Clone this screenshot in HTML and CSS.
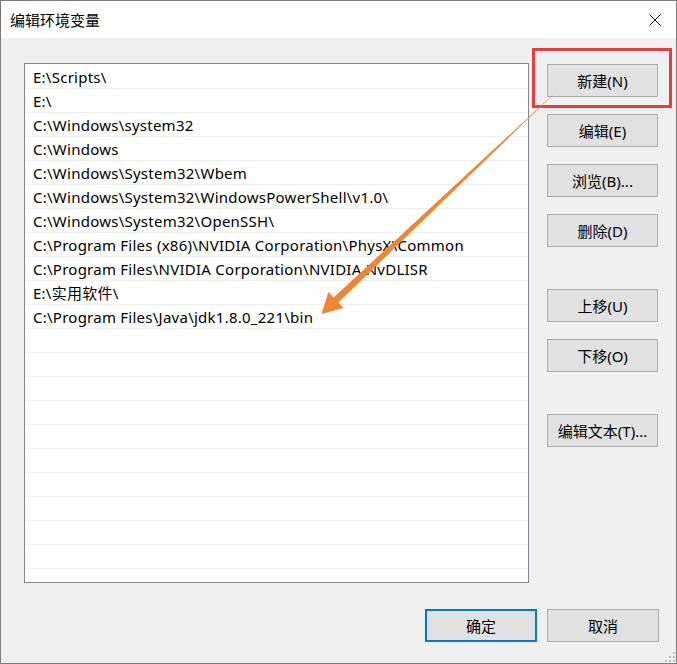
FILE: index.html
```html
<!DOCTYPE html>
<html lang="zh-CN">
<head>
    <meta charset="UTF-8">
    <title>编辑环境变量</title>
    <link rel="stylesheet" href="styles.css">
</head>
<body>
    <div class="window">
        <div class="titlebar">
            <span class="title">编辑环境变量</span>
            <span class="close">
                <svg width="12" height="12" viewBox="0 0 12 12">
                    <path d="M0.5 0.5 L11.5 11.5 M11.5 0.5 L0.5 11.5" stroke="#111" stroke-width="1" fill="none"/>
                </svg>
            </span>
        </div>

        <div class="content">
            <div class="path-list">
                <div class="row">E:\Scripts\</div>
                <div class="row">E:\</div>
                <div class="row">C:\Windows\system32</div>
                <div class="row">C:\Windows</div>
                <div class="row">C:\Windows\System32\Wbem</div>
                <div class="row">C:\Windows\System32\WindowsPowerShell\v1.0\</div>
                <div class="row">C:\Windows\System32\OpenSSH\</div>
                <div class="row">C:\Program Files (x86)\NVIDIA Corporation\PhysX\Common</div>
                <div class="row">C:\Program Files\NVIDIA Corporation\NVIDIA NvDLISR</div>
                <div class="row">E:\实用软件\</div>
                <div class="row">C:\Program Files\Java\jdk1.8.0_221\bin</div>
                <div class="row"></div>
                <div class="row"></div>
                <div class="row"></div>
                <div class="row"></div>
                <div class="row"></div>
                <div class="row"></div>
                <div class="row"></div>
                <div class="row"></div>
                <div class="row"></div>
                <div class="row"></div>
                <div class="row"></div>
            </div>

            <div class="side">
                <button class="btn">新建(N)</button>
                <button class="btn">编辑(E)</button>
                <button class="btn">浏览(B)...</button>
                <button class="btn">删除(D)</button>
                <button class="btn btn-group">上移(U)</button>
                <button class="btn">下移(O)</button>
                <button class="btn btn-group">编辑文本(T)...</button>
            </div>
        </div>

        <div class="footer">
            <button class="btn btn-wide btn-default">确定</button>
            <button class="btn btn-wide">取消</button>
        </div>

        <svg class="grip" width="10" height="10" viewBox="0 0 10 10">
            <rect x="8" y="0" width="2" height="2" fill="#bcbcbc"/>
            <rect x="4" y="4" width="2" height="2" fill="#bcbcbc"/>
            <rect x="8" y="4" width="2" height="2" fill="#bcbcbc"/>
            <rect x="0" y="8" width="2" height="2" fill="#bcbcbc"/>
            <rect x="4" y="8" width="2" height="2" fill="#bcbcbc"/>
            <rect x="8" y="8" width="2" height="2" fill="#bcbcbc"/>
        </svg>

        <!-- annotation: red box + arrow drawn over the dialog -->
        <div class="highlight"></div>
        <svg class="arrow" width="677" height="664" viewBox="0 0 677 664">
            <polygon points="559,89 338.4,302.5 343.6,308 321.5,314 328.4,292 333.6,297.5" fill="#ef8634"/>
        </svg>
    </div>
</body>
</html>
```

FILE: styles.css
```css
body {
    margin: 0;
    font-family: "Noto Sans", "Noto Sans CJK SC", sans-serif;
    font-size: 15px;
    color: #000;
}

.window {
    position: relative;
    width: 677px;
    height: 664px;
    box-sizing: border-box;
    border: 1px solid #7a7a7a;
    background-color: #f0f0f0;
    display: flex;
    flex-direction: column;
    overflow: hidden;
}

.titlebar {
    height: 37px;
    background-color: #fff;
    display: flex;
    align-items: center;
    justify-content: space-between;
    padding: 0 15px 0 9px;
}

.title {
    font-size: 15px;
}

.close {
    display: flex;
    align-items: center;
}

.content {
    display: flex;
    padding: 25px 0 0 23px;
    gap: 18px;
}

.path-list {
    width: 505px;
    height: 520px;
    box-sizing: border-box;
    border: 1px solid #828790;
    background-color: #fff;
    padding-top: 1px;
    overflow: hidden;
}

.row {
    height: 24px;
    box-sizing: border-box;
    border-bottom: 1px solid #efefef;
    padding-left: 8px;
    line-height: 25px;
    letter-spacing: 0.25px;
    white-space: nowrap;
}

.side {
    display: flex;
    flex-direction: column;
    gap: 17px;
    padding-top: 1px;
}

.btn {
    width: 111px;
    height: 33px;
    box-sizing: border-box;
    background-color: #e1e1e1;
    border: 1px solid #adadad;
    font-family: inherit;
    font-size: 15px;
    color: #000;
    padding: 0;
}

.btn-group {
    margin-top: 25px;
}

.footer {
    display: flex;
    justify-content: flex-end;
    gap: 10px;
    padding: 26px 17px 0 0;
}

.btn-wide {
    width: 112px;
}

.btn-default {
    border: 2px solid #0078d7;
}

.grip {
    position: absolute;
    right: 1px;
    bottom: 1px;
}

.highlight {
    position: absolute;
    left: 531px;
    top: 47px;
    width: 140px;
    height: 60px;
    box-sizing: border-box;
    border: 3px solid #e5403f;
}

.arrow {
    position: absolute;
    left: -1px;
    top: -1px;
}
```
